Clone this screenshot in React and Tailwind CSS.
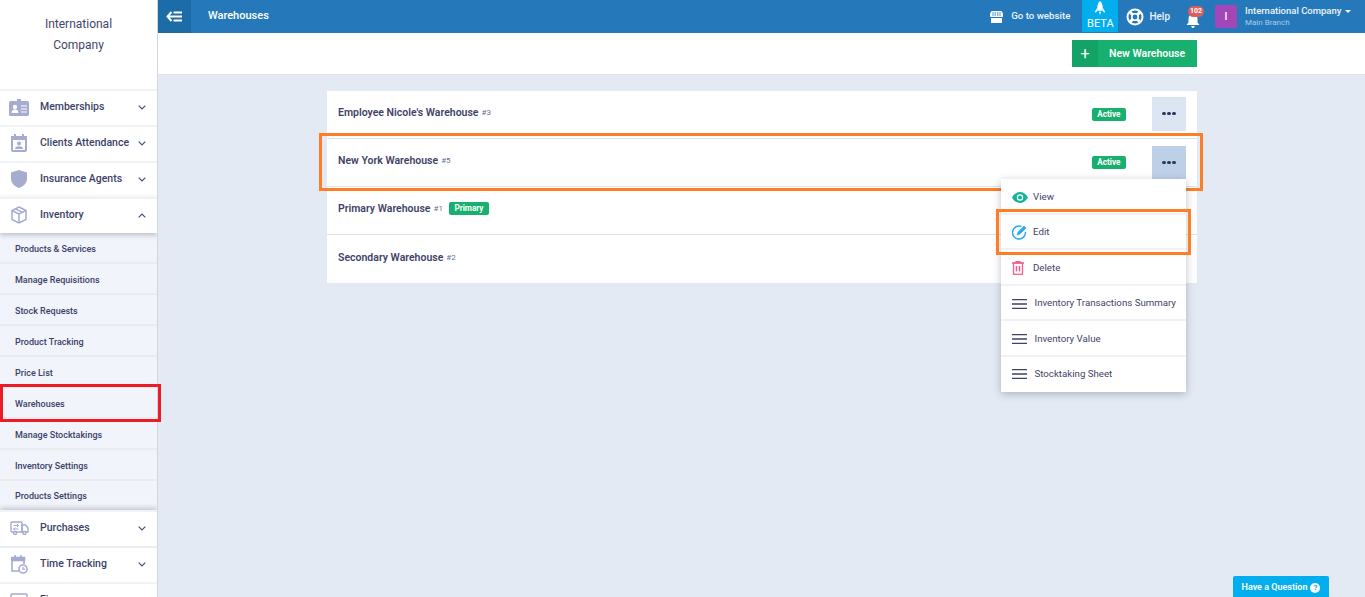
const sideIcon = '#a6abd0';

function MembershipIcon() {
  return (
    <svg width="20" height="17" viewBox="0 0 20 17">
      <rect x="0" y="2" width="20" height="15" rx="1.500" fill={sideIcon} />
      <rect x="8" y="0" width="4" height="3" fill={sideIcon} />
      <circle cx="6" cy="8" r="2.200" fill="#fff" />
      <path d="M2.500 14c0-2.500 1.500-3.500 3.500-3.500s3.500 1 3.500 3.500z" fill="#fff" />
      <path d="M12 7h6M12 10h6M12 13h6" stroke="#fff" strokeWidth="1.200" />
    </svg>
  );
}

function AttendanceIcon() {
  return (
    <svg width="16" height="18" viewBox="0 0 16 18">
      <rect x="1" y="3" width="14" height="14" rx="1" fill="none" stroke={sideIcon} strokeWidth="2" />
      <rect x="0" y="2" width="16" height="4" fill={sideIcon} />
      <path d="M4 0v3M12 0v3" stroke={sideIcon} strokeWidth="2" />
      <circle cx="8" cy="9.500" r="2" fill={sideIcon} />
      <path d="M4 15c0-2 2-2.700 4-2.700s4 .7 4 2.700z" fill={sideIcon} />
    </svg>
  );
}

function ShieldIcon() {
  return (
    <svg width="16" height="18" viewBox="0 0 16 18">
      <path d="M8 0l8 2.500v6c0 4.500-3.500 8-8 9.500-4.500-1.500-8-5-8-9.500v-6z" fill={sideIcon} />
    </svg>
  );
}

function BoxIcon() {
  return (
    <svg width="16" height="18" viewBox="0 0 16 18" fill="none" stroke={sideIcon} strokeWidth="1.500">
      <path d="M8 1l7 3.500v9L8 17l-7-3.500v-9z" />
      <path d="M1 4.500L8 8l7-3.500M8 8v9M4.500 2.800l7 3.500" />
    </svg>
  );
}

function TruckIcon() {
  return (
    <svg width="19" height="14" viewBox="0 0 19 14" fill="none" stroke={sideIcon} strokeWidth="1.400">
      <rect x="1" y="1" width="11" height="10" rx="1" />
      <path d="M12 4h3.500L18 7v4h-6z" />
      <circle cx="5" cy="12" r="1.500" fill="#fff" />
      <circle cx="14.500" cy="12" r="1.500" fill="#fff" />
      <path d="M3.500 4.500h5M7 3l1.500 1.500L7 6M8.500 8h-5M5 6.500L3.500 8 5 9.500" strokeWidth="1" />
    </svg>
  );
}

function TimeIcon() {
  return (
    <svg width="17" height="19" viewBox="0 0 17 19" fill="none" stroke={sideIcon} strokeWidth="1.600">
      <path d="M8 16H1V3h12v6" />
      <rect x="0.500" y="2.500" width="13" height="3" fill={sideIcon} />
      <path d="M4 0v3M10 0v3" />
      <circle cx="12" cy="14" r="4" fill="#fff" />
      <path d="M12 12v2.200h2" strokeWidth="1.200" />
    </svg>
  );
}

function FinanceIcon() {
  return (
    <svg width="18" height="14" viewBox="0 0 18 14" fill="none" stroke={sideIcon} strokeWidth="1.500">
      <rect x="1" y="1" width="16" height="12" rx="1" />
      <path d="M4 5h10" />
    </svg>
  );
}

function Chevron({ up }) {
  return (
    <svg width="8" height="5" viewBox="0 0 8 5" fill="none" stroke="#4a4f73" strokeWidth="1.200" className={up ? 'rotate-180' : ''}>
      <path d="M.7.7L4 4 7.300.7" />
    </svg>
  );
}

function SideItem({ icon, label, up }) {
  return (
    <div className="h-9 shrink-0 flex items-center border-t-2 border-[#f1f2f6] bg-white pb-[2px] pr-[11px]">
      <div className="w-[40px] flex justify-center shrink-0 pr-[2px]">{icon}</div>
      <span className="flex-1 text-[10.500px] font-medium text-[#3c3f68] whitespace-nowrap">{label}</span>
      <Chevron up={up} />
    </div>
  );
}

const subItems = [
  'Products & Services',
  'Manage Requisitions',
  'Stock Requests',
  'Product Tracking',
  'Price List',
  'Warehouses',
  'Manage Stocktakings',
  'Inventory Settings',
  'Products Settings',
];

function Sidebar() {
  return (
    <aside className="w-[158px] shrink-0 h-full overflow-hidden bg-white border-r border-[#d3d6dc] flex flex-col">
      <div className="h-[89px] shrink-0 pt-[14px] text-center text-[12px] leading-[21px] text-[#43466c]">
        International
        <br />
        Company
      </div>
      <SideItem icon={<MembershipIcon />} label="Memberships" />
      <SideItem icon={<AttendanceIcon />} label="Clients Attendance" />
      <SideItem icon={<ShieldIcon />} label="Insurance Agents" />
      <div className="relative z-10 shadow-[0_2px_5px_rgba(60,60,90,0.3)]">
        <SideItem icon={<BoxIcon />} label="Inventory" up />
      </div>
      <div className="shrink-0 bg-[#f1f4fa]">
        {subItems.map((item, i) => (
          <div
            key={item}
            className={`flex items-center pl-[15px] text-[9px] font-medium text-[#3c3f68] ${i < 8 ? 'h-[31px] pt-[5px] border-b-2 border-[#e9ebf0]' : 'h-[29px] pt-[3px]'}`}
          >
            {item}
          </div>
        ))}
      </div>
      <div className="relative z-10 shadow-[0_-2px_5px_rgba(60,60,90,0.25)]">
        <SideItem icon={<TruckIcon />} label="Purchases" />
      </div>
      <SideItem icon={<TimeIcon />} label="Time Tracking" />
      <SideItem icon={<FinanceIcon />} label="Finance" />
    </aside>
  );
}

function TopBar() {
  return (
    <header className="h-[33px] shrink-0 bg-[#2579bb] flex items-center text-white">
      <div className="w-[33px] h-full bg-[#1c6ca8] flex items-center justify-center pr-[1px]">
        <svg width="16" height="11" viewBox="0 0 16 11" fill="none" stroke="#fff" strokeWidth="2">
          <path d="M5.500 1L1.500 5.500l4 4.500M2 5.500h14M7.500 1.500H16M7.500 9.500H16" />
        </svg>
      </div>
      <span className="ml-[17px] text-[11px] font-medium">Warehouses</span>
      <div className="ml-auto flex items-center h-full">
        <svg width="13" height="12" viewBox="0 0 13 12" fill="#fff">
          <path d="M1.500 0h10L13 2.500V5c0 .6-.5 1-1 1H1C.5 6 0 5.600 0 5V2.500z" />
          <path d="M1 7h11v5H1z" />
          <path d="M3 1v4M5.200 1v4M7.800 1v4M10 1v4" stroke="#2579bb" strokeWidth=".8" />
        </svg>
        <span className="ml-[8px] text-[9.700px] font-medium text-[#edf4fa]">Go to website</span>
        <div className="ml-[12px] w-[36px] h-[32px] self-start bg-[#03aeef] flex flex-col items-center">
          <svg width="10" height="14" viewBox="0 0 9 13" fill="#fff" className="mt-[1px]">
            <path d="M4.500 0C6.500 2 7 4 7 6.500V9H2V6.500C2 4 2.500 2 4.500 0z" />
            <path d="M2 6L0 9.500V11l2-1.500zM7 6l2 3.500V11L7 9.500zM3.500 10h2L4.500 13z" />
          </svg>
          <span className="text-[11px] leading-[13px] mt-[2px]">BETA</span>
        </div>
        <svg width="18" height="18" viewBox="0 0 18 18" fill="none" stroke="#fff" className="ml-[8px]">
          <circle cx="9" cy="9" r="7.500" strokeWidth="2" />
          <circle cx="9" cy="9" r="3.200" strokeWidth="1.600" />
          <path d="M3.500 3.500l3.200 3.200M14.500 3.500l-3.200 3.200M3.500 14.500l3.200-3.200M14.500 14.500l-3.200-3.200" strokeWidth="3" />
        </svg>
        <span className="ml-[5px] text-[10px] font-medium text-[#edf4fa]">Help</span>
        <div className="relative ml-[16px] w-[14px] h-[14px] mt-[9px]">
          <svg width="14" height="14" viewBox="0 0 14 14" fill="#fff">
            <path d="M7 0c3 0 4.500 2 4.500 5v3.500L13.500 11H.5l2-2.500V5C2.500 2 4 0 7 0zM5.200 12h3.600C8.600 13.300 7.900 14 7 14s-1.600-.7-1.800-2z" />
          </svg>
          <span className="absolute -top-[8px] left-[2px] w-[16px] h-[11px] rounded-full bg-[#d9605f] text-[7px] leading-[11px] font-bold text-center">102</span>
        </div>
        <div className="ml-[15px] w-[22px] h-[23px] rounded-[2px] bg-[#a346b8] flex items-center justify-center text-[10px] font-medium">I</div>
        <div className="ml-[8px] w-[120px] flex flex-col">
          <div className="flex items-center text-[9.500px] leading-[12px] font-medium text-[#edf4fa]">
            International Company
            <span className="ml-[4px] border-x-[3px] border-x-transparent border-t-[3px] border-t-white" />
          </div>
          <div className="text-[8px] leading-[10px] mt-[1px] text-[#a9cbe6]">Main Branch</div>
        </div>
      </div>
    </header>
  );
}

function Badge({ children, className = '' }) {
  return (
    <span className={`h-[13px] px-[5.500px] rounded-[2px] bg-[#17b06f] text-white text-[8.200px] leading-[13px] font-bold ${className}`}>
      {children}
    </span>
  );
}

function WarehouseRow({ name, no, primary, active, open, action = true, last, textLift, buttonLift }) {
  return (
    <div className={`h-[48px] flex items-center pl-[11px] pr-[11px] ${last ? '' : 'border-b border-[#dfe2e8]'}`}>
      <div className={`flex items-center ${textLift}`}>
        <span className="text-[10.500px] font-semibold text-[#3f4268]">{name}</span>
        <span className="ml-[3px] text-[8px] text-[#6a6f9a]">#{no}</span>
        {primary && <Badge className="ml-[6px]">Primary</Badge>}
      </div>
      {active && <Badge className="ml-auto">Active</Badge>}
      {action && (
        <button className={`ml-[26px] w-[34px] h-[34px] flex items-center justify-center gap-[1.500px] ${buttonLift || ''} ${open ? 'bg-[#bed0e7]' : 'bg-[#dce6f2]'}`}>
          <span className="w-[3.500px] h-[3.500px] rounded-full bg-[#33375c]" />
          <span className="w-[3.500px] h-[3.500px] rounded-full bg-[#33375c]" />
          <span className="w-[3.500px] h-[3.500px] rounded-full bg-[#33375c]" />
        </button>
      )}
    </div>
  );
}

function MenuBars() {
  return (
    <svg width="15" height="10" viewBox="0 0 15 10" fill="none" stroke="#3f4268" strokeWidth="1.300">
      <path d="M0 .7h15M0 5h15M0 9.300h15" />
    </svg>
  );
}

function ActionMenu() {
  const items = [
    {
      label: 'View',
      icon: (
        <svg width="16" height="11" viewBox="0 0 16 11">
          <path d="M0 5.500C2 2 4.800 0 8 0s6 2 8 5.500C14 9 11.200 11 8 11S2 9 0 5.500z" fill="#13b59a" />
          <circle cx="8" cy="5.500" r="3.200" fill="#fff" />
          <circle cx="8" cy="5.500" r="2" fill="#13b59a" />
        </svg>
      ),
    },
    {
      label: 'Edit',
      icon: (
        <svg width="15" height="15" viewBox="0 0 15 15" fill="none" stroke="#29a9ee" strokeWidth="1.500">
          <path d="M9.500 1.500A6.500 6.500 0 1 0 13.500 7" />
          <path d="M5 10l1-3L12 1l2 2-6 6z" fill="#29a9ee" strokeWidth=".6" />
        </svg>
      ),
    },
    {
      label: 'Delete',
      icon: (
        <svg width="12" height="14" viewBox="0 0 12 14" fill="none" stroke="#f4628a" strokeWidth="1.300">
          <path d="M0 2h12M4 2V.7h4V2" />
          <rect x="1.500" y="2" width="9" height="11.300" />
          <path d="M4.500 5v5.500M7.500 5v5.500" strokeWidth="1.500" />
        </svg>
      ),
    },
    { label: 'Inventory Transactions Summary', bars: true },
    { label: 'Inventory Value', bars: true },
    { label: 'Stocktaking Sheet', bars: true },
  ];
  return (
    <div className="absolute left-[843px] top-[146px] w-[185px] bg-white shadow-[0_2px_8px_rgba(40,50,80,0.3)] z-20">
      {items.map((item, i) => (
        <div
          key={item.label}
          className={`h-[35.500px] flex items-center text-[9.700px] text-[#3f4268] ${i < 5 ? 'pt-[3px] border-b-2 border-[#f0f1f5]' : ''}`}
        >
          <div className="w-[32px] pl-[11px] shrink-0 flex items-center">{item.bars ? <MenuBars /> : item.icon}</div>
          <span className={item.bars ? 'ml-[1.500px]' : ''}>{item.label}</span>
        </div>
      ))}
    </div>
  );
}

export default function App() {
  return (
    <div className="relative h-[597px] w-full overflow-hidden flex bg-[#e4eaf3] font-['Roboto',sans-serif]">
      <Sidebar />
      <main className="flex-1 min-w-0 flex flex-col">
        <TopBar />
        <div className="relative flex-1 flex flex-col">
          <div className="h-[42px] shrink-0 bg-white border-b border-[#dfe3ea] pt-[7px] pl-[914px]">
            <button className="w-[125px] h-[27px] flex bg-[#17b06f] text-white">
              <span className="w-[26px] h-full bg-[#14a367] flex items-center justify-center text-[16px] leading-none">+</span>
              <span className="flex-1 text-left pl-[11px] text-[10.500px] leading-[27px] font-semibold">New Warehouse</span>
            </button>
          </div>
          <div className="mt-[16px] ml-[169px] w-[870px] bg-white">
            <WarehouseRow name="Employee Nicole's Warehouse" no="3" active textLift="mb-[4px]" buttonLift="-mt-[2px]" />
            <WarehouseRow name="New York Warehouse" no="5" active open textLift="mb-[4px]" />
            <WarehouseRow name="Primary Warehouse" no="1" primary action={false} textLift="mb-[4px]" />
            <WarehouseRow name="Secondary Warehouse" no="2" action={false} last textLift="mb-[2px]" />
          </div>
          <ActionMenu />
          <div className="absolute left-[1075px] bottom-0 w-[96px] h-[21px] pt-[3px] bg-[#03aeef] rounded-t-[2px] flex items-center justify-center gap-[3px] text-white text-[9px] font-semibold">
            Have a Question
            <span className="w-[10px] h-[10px] rounded-full bg-white text-[#03aeef] text-[8px] leading-[10px] font-bold text-center">?</span>
          </div>
        </div>
      </main>
      {/* annotation boxes drawn over the screenshot */}
      <div className="absolute left-[0px] top-[384px] w-[161px] h-[38px] border-[3px] border-[#ed1c24] z-30" />
      <div className="absolute left-[319px] top-[133px] w-[884px] h-[58px] border-[3px] border-[#fd7e27] z-10" />
      <div className="absolute left-[996px] top-[209px] w-[195px] h-[46px] border-[3px] border-[#fd7e27] z-30" />
    </div>
  );
}
